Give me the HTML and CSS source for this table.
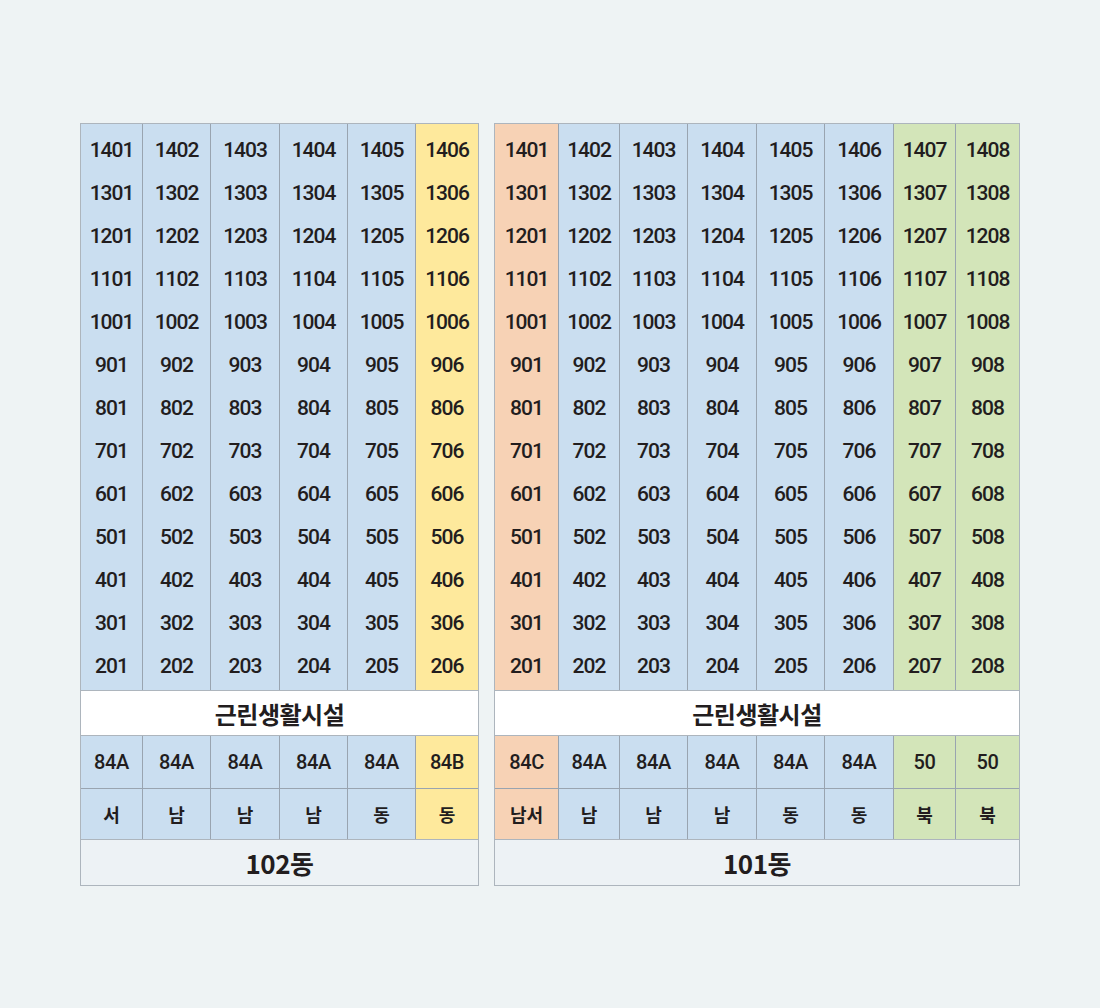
FILE: index.html
```html
<!DOCTYPE html>
<html lang="ko">
<head>
<meta charset="utf-8">
<link rel="stylesheet" href="styles.css">
</head>
<body>
<div class="page">
  <div class="bldg b102">
    <div class="floors grid">
      <div class="col blue"><span>1401</span><span>1301</span><span>1201</span><span>1101</span><span>1001</span><span>901</span><span>801</span><span>701</span><span>601</span><span>501</span><span>401</span><span>301</span><span>201</span></div>
      <div class="col blue"><span>1402</span><span>1302</span><span>1202</span><span>1102</span><span>1002</span><span>902</span><span>802</span><span>702</span><span>602</span><span>502</span><span>402</span><span>302</span><span>202</span></div>
      <div class="col blue"><span>1403</span><span>1303</span><span>1203</span><span>1103</span><span>1003</span><span>903</span><span>803</span><span>703</span><span>603</span><span>503</span><span>403</span><span>303</span><span>203</span></div>
      <div class="col blue"><span>1404</span><span>1304</span><span>1204</span><span>1104</span><span>1004</span><span>904</span><span>804</span><span>704</span><span>604</span><span>504</span><span>404</span><span>304</span><span>204</span></div>
      <div class="col blue"><span>1405</span><span>1305</span><span>1205</span><span>1105</span><span>1005</span><span>905</span><span>805</span><span>705</span><span>605</span><span>505</span><span>405</span><span>305</span><span>205</span></div>
      <div class="col yellow"><span>1406</span><span>1306</span><span>1206</span><span>1106</span><span>1006</span><span>906</span><span>806</span><span>706</span><span>606</span><span>506</span><span>406</span><span>306</span><span>206</span></div>
    </div>
    <div class="shop">근린생활시설</div>
    <div class="types grid">
      <div class="cell blue">84A</div><div class="cell blue">84A</div><div class="cell blue">84A</div><div class="cell blue">84A</div><div class="cell blue">84A</div><div class="cell yellow">84B</div>
    </div>
    <div class="dirs grid">
      <div class="cell blue">서</div><div class="cell blue">남</div><div class="cell blue">남</div><div class="cell blue">남</div><div class="cell blue">동</div><div class="cell yellow">동</div>
    </div>
    <div class="name">102동</div>
  </div>

  <div class="bldg b101">
    <div class="floors grid">
      <div class="col orange"><span>1401</span><span>1301</span><span>1201</span><span>1101</span><span>1001</span><span>901</span><span>801</span><span>701</span><span>601</span><span>501</span><span>401</span><span>301</span><span>201</span></div>
      <div class="col blue"><span>1402</span><span>1302</span><span>1202</span><span>1102</span><span>1002</span><span>902</span><span>802</span><span>702</span><span>602</span><span>502</span><span>402</span><span>302</span><span>202</span></div>
      <div class="col blue"><span>1403</span><span>1303</span><span>1203</span><span>1103</span><span>1003</span><span>903</span><span>803</span><span>703</span><span>603</span><span>503</span><span>403</span><span>303</span><span>203</span></div>
      <div class="col blue"><span>1404</span><span>1304</span><span>1204</span><span>1104</span><span>1004</span><span>904</span><span>804</span><span>704</span><span>604</span><span>504</span><span>404</span><span>304</span><span>204</span></div>
      <div class="col blue"><span>1405</span><span>1305</span><span>1205</span><span>1105</span><span>1005</span><span>905</span><span>805</span><span>705</span><span>605</span><span>505</span><span>405</span><span>305</span><span>205</span></div>
      <div class="col blue"><span>1406</span><span>1306</span><span>1206</span><span>1106</span><span>1006</span><span>906</span><span>806</span><span>706</span><span>606</span><span>506</span><span>406</span><span>306</span><span>206</span></div>
      <div class="col green"><span>1407</span><span>1307</span><span>1207</span><span>1107</span><span>1007</span><span>907</span><span>807</span><span>707</span><span>607</span><span>507</span><span>407</span><span>307</span><span>207</span></div>
      <div class="col green"><span>1408</span><span>1308</span><span>1208</span><span>1108</span><span>1008</span><span>908</span><span>808</span><span>708</span><span>608</span><span>508</span><span>408</span><span>308</span><span>208</span></div>
    </div>
    <div class="shop">근린생활시설</div>
    <div class="types grid">
      <div class="cell orange">84C</div><div class="cell blue">84A</div><div class="cell blue">84A</div><div class="cell blue">84A</div><div class="cell blue">84A</div><div class="cell blue">84A</div><div class="cell green">50</div><div class="cell green">50</div>
    </div>
    <div class="dirs grid">
      <div class="cell orange">남서</div><div class="cell blue">남</div><div class="cell blue">남</div><div class="cell blue">남</div><div class="cell blue">동</div><div class="cell blue">동</div><div class="cell green">북</div><div class="cell green">북</div>
    </div>
    <div class="name">101동</div>
  </div>
</div>
</body>
</html>
```
FILE: styles.css
```css
html, body {
  margin: 0;
  padding: 0;
  background: #eef3f4;
}
body {
  font-family: Roboto, "Noto Sans CJK KR", sans-serif;
  color: #221d1e;
}
.page {
  display: flex;
  align-items: flex-start;
  gap: 15px;
  padding: 123px 0 0 80px;
  height: 1008px;
  box-sizing: border-box;
}
.bldg {
  border: 1px solid #adb5bd;
  background: #edf2f5;
}
.grid {
  display: grid;
}
.b102 .grid {
  grid-template-columns: 61px 68px 69px 68px 68px 63px;
}
.b101 .grid {
  grid-template-columns: 63px 61px 68px 69px 68px 69px 62px 64px;
}
.grid > div + div {
  border-left: 1px solid #99a4b0;
}
.blue { background: #cadef0; }
.yellow { background: #fee99c; }
.orange { background: #f7d2b5; }
.green { background: #d3e5b9; }

.col {
  display: flex;
  flex-direction: column;
  padding: 4px 0 3px;
}
.col span {
  height: 43px;
  display: flex;
  align-items: center;
  justify-content: center;
  font-size: 21px;
  font-weight: 500;
  letter-spacing: -1px;
}
.shop {
  border-top: 1px solid #adb5bd;
  background: #fff;
  height: 44px;
  display: flex;
  align-items: center;
  justify-content: center;
  font-family: "Noto Sans CJK KR", sans-serif;
  font-weight: 700;
  font-size: 24px;
  letter-spacing: -0.5px;
}
.types {
  border-top: 1px solid #adb5bd;
}
.types .cell {
  height: 52px;
  display: flex;
  align-items: center;
  justify-content: center;
  font-size: 20px;
  font-weight: 500;
  letter-spacing: -0.4px;
}
.dirs {
  border-top: 1px solid #99a4b0;
  border-bottom: 1px solid #adb5bd;
}
.dirs .cell {
  height: 50px;
  display: flex;
  align-items: center;
  justify-content: center;
  font-family: "Noto Sans CJK KR", sans-serif;
  font-size: 18px;
  font-weight: 700;
}
.name {
  height: 45px;
  display: flex;
  align-items: center;
  justify-content: center;
  font-family: "Noto Sans CJK KR", sans-serif;
  font-size: 26px;
  font-weight: 700;
  letter-spacing: -0.5px;
}
```
